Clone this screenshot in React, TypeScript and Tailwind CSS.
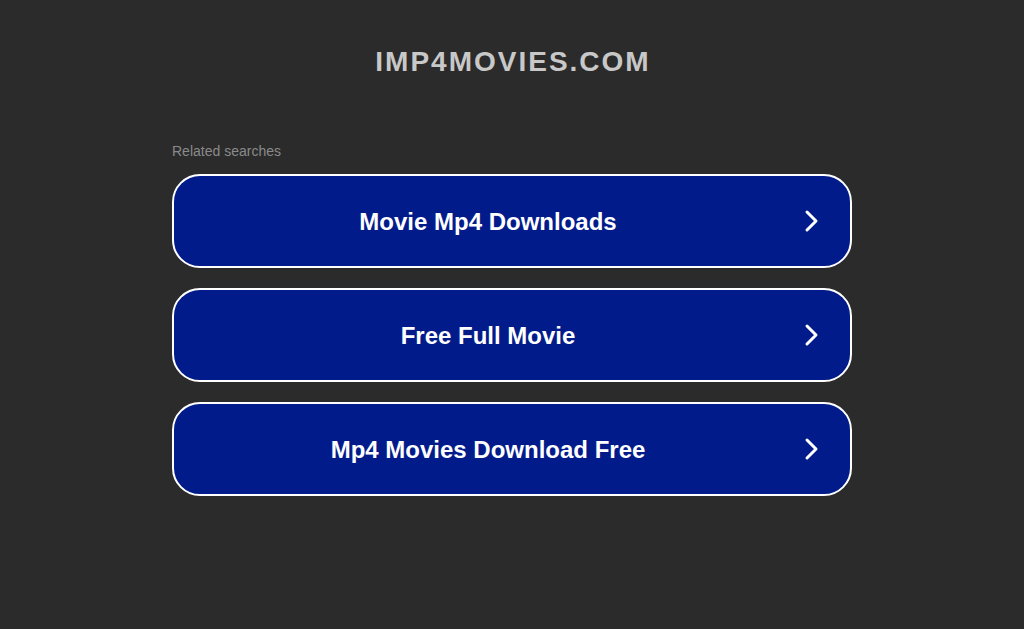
import React from "react";

const items = ["Movie Mp4 Downloads", "Free Full Movie", "Mp4 Movies Download Free"];

export default function App() {
  return (
    <div className="min-h-[629px] bg-[#2b2b2b] flex flex-col items-center" style={{ fontFamily: '"Liberation Sans", Arial, sans-serif' }}>
      <h1 className="mt-[44px] text-[28px] leading-[36px] font-bold text-[#c8c8c8] tracking-[2px] pl-[2px]">IMP4MOVIES.COM</h1>
      <div className="w-[680px] mt-[63px]">
        <div className="text-[14px] leading-[16px] text-[#8a8a8a]">Related searches</div>
        <div className="mt-[15px] flex flex-col gap-[20px]">
          {items.map((t) => (
            <div key={t} className="h-[94px] rounded-[28px] border-2 border-white bg-[#021b8a] flex items-center pl-[6px] pr-[30px]">
              <span className="flex-1 text-center text-white font-bold text-[24px] leading-[28px] pt-[2px]">{t}</span>
              <svg width="16" height="24" viewBox="0 0 16 24" className="ml-[8px]">
                <path d="M3 3 L12 12 L3 21" stroke="white" strokeWidth="3" fill="none" strokeLinecap="round" strokeLinejoin="round" />
              </svg>
            </div>
          ))}
        </div>
      </div>
    </div>
  );
}
